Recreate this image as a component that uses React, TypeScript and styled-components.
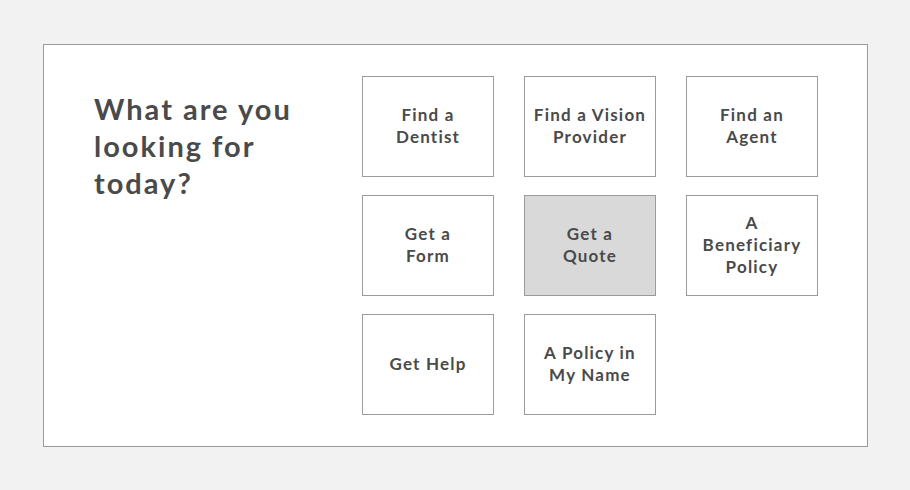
import React from "react";
import styled, { createGlobalStyle } from "styled-components";

const GlobalStyle = createGlobalStyle`
  html, body {
    margin: 0;
    padding: 0;
    background: #f2f2f2;
  }
  body {
    font-family: "Lato", "Liberation Sans", sans-serif;
    color: #4a4a4a;
  }
`;

const options = [
  { lines: ["Find a", "Dentist"] },
  { lines: ["Find a Vision", "Provider"] },
  { lines: ["Find an", "Agent"] },
  { lines: ["Get a", "Form"] },
  { lines: ["Get a", "Quote"], active: true },
  { lines: ["A", "Beneficiary", "Policy"] },
  { lines: ["Get Help"] },
  { lines: ["A Policy in", "My Name"] },
];

export default function App() {
  return (
    <>
      <GlobalStyle />
      <Page>
        <Card>
          <Title>
            What are you
            <br />
            looking for
            <br />
            today?
          </Title>
          <Grid>
            {options.map((o) => (
              <Tile key={o.lines.join(" ")} $active={o.active}>
                {o.lines.map((l) => (
                  <TileLine key={l}>{l}</TileLine>
                ))}
              </Tile>
            ))}
          </Grid>
        </Card>
      </Page>
    </>
  );
}

const Page = styled.div`
  padding: 44px 42px 43px 43px;
`;

const Card = styled.div`
  width: 825px;
  height: 403px;
  box-sizing: border-box;
  background: #fff;
  border: 1px solid #9b9b9b;
  display: flex;
  justify-content: space-between;
  padding: 31px 49px 0 50px;
`;

const Title = styled.h1`
  margin: 14px 0 0;
  font-size: 29px;
  line-height: 37px;
  font-weight: 700;
  letter-spacing: 2px;
`;

const Grid = styled.div`
  display: grid;
  grid-template-columns: repeat(3, 132px);
  grid-auto-rows: 101px;
  column-gap: 30px;
  row-gap: 18px;
  align-content: start;
`;

const Tile = styled.button<{ $active?: boolean }>`
  box-sizing: border-box;
  border: 1px solid #9b9b9b;
  background: ${(p) => (p.$active ? "#d9d9d9" : "#fff")};
  display: flex;
  flex-direction: column;
  align-items: center;
  justify-content: center;
  padding: 0 0 1px;
  font: inherit;
  color: inherit;
  cursor: pointer;
`;

const TileLine = styled.span`
  display: block;
  font-size: 17px;
  line-height: 22px;
  font-weight: 700;
  letter-spacing: 1.2px;
  white-space: nowrap;
`;
